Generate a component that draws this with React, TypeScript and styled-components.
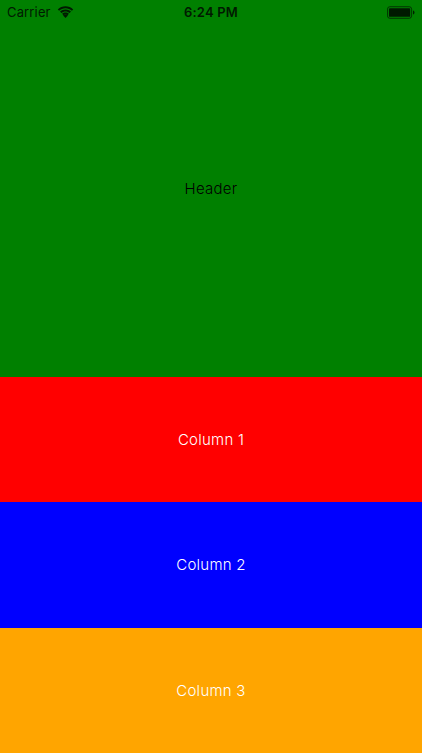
import { FC } from 'react';
import styled, { createGlobalStyle } from 'styled-components';

const GlobalStyle = createGlobalStyle`
  html, body, #root {
    height: 100%;
    margin: 0;
    padding: 0;
  }

  body {
    font-family: Inter, 'Liberation Sans', sans-serif;
  }
`;

const Screen = styled.div`
  position: relative;
  display: flex;
  flex-direction: column;
  width: 422px;
  height: 753px;
  overflow: hidden;
`;

const StatusBar = styled.div`
  position: absolute;
  top: 0;
  left: 0;
  right: 0;
  height: 24px;
  display: grid;
  grid-template-columns: 1fr auto 1fr;
  align-items: center;
  padding: 0 7px 0 7px;
  color: #001a00;
  font-size: 13px;
`;

const StatusLeft = styled.div`
  display: flex;
  align-items: center;
  gap: 6px;
  letter-spacing: 0.15px;
`;

const StatusRight = styled.div`
  display: flex;
  justify-content: flex-end;
`;

const Clock = styled.span`
  font-weight: 600;
  letter-spacing: 0.2px;
`;

const Panel = styled.div<{ $bg: string; $grow: number; $fg: string }>`
  flex: ${({ $grow }) => $grow} 1 0;
  display: flex;
  align-items: center;
  justify-content: center;
  background: ${({ $bg }) => $bg};
  color: ${({ $fg }) => $fg};
  font-size: 15px;
  font-weight: 300;
  letter-spacing: 0.25px;
`;

const Wifi: FC = () => (
  <svg width="17" height="12" viewBox="0 0 17 12" fill="currentColor">
    <path d="M8.5 2.2c2.5 0 4.7 1 6.4 2.6L16.2 3.4C14.2 1.4 11.5.2 8.5.2S2.8 1.4.8 3.4l1.3 1.4C3.8 3.2 6 2.2 8.5 2.2z" />
    <path d="M8.5 5.4c1.6 0 3 .6 4.1 1.6l1.4-1.4C12.5 4.2 10.6 3.4 8.5 3.4S4.500 4.200 3 5.600L4.400 7c1.100-1 2.500-1.600 4.100-1.600z" />
    <path d="M8.500 8.400c.8 0 1.500.3 2 .8l1.400-1.400c-.9-.9-2.100-1.400-3.400-1.400s-2.500.5-3.400 1.400l1.400 1.400c.5-.5 1.200-.8 2-.8z" />
    <path d="M8.500 12 6.100 9.600c.6-.6 1.500-1 2.400-1s1.800.4 2.400 1z" />
  </svg>
);

const Battery: FC = () => (
  <svg width="28" height="13" viewBox="0 0 29 13" fill="currentColor">
    <rect x="0.5" y="0.5" width="25" height="12" rx="2.5" fill="none" stroke="currentColor" opacity="0.75" />
    <rect x="2" y="2" width="22" height="9" rx="1" />
    <path d="M27 4.500c.8.200 1.500.9 1.500 2s-.7 1.800-1.500 2z" />
  </svg>
);

const App: FC = () => (
  <Screen>
    <GlobalStyle />
    <Panel $bg="#008000" $fg="#000000" $grow={3}>
      Header
    </Panel>
    <Panel $bg="#ff0000" $fg="#ffffff" $grow={1}>
      Column 1
    </Panel>
    <Panel $bg="#0000ff" $fg="#ffffff" $grow={1}>
      Column 2
    </Panel>
    <Panel $bg="#ffa500" $fg="#ffffff" $grow={1}>
      Column 3
    </Panel>
    <StatusBar>
      <StatusLeft>
        <span>Carrier</span>
        <Wifi />
      </StatusLeft>
      <Clock>6:24 PM</Clock>
      <StatusRight>
        <Battery />
      </StatusRight>
    </StatusBar>
  </Screen>
);

export default App;
